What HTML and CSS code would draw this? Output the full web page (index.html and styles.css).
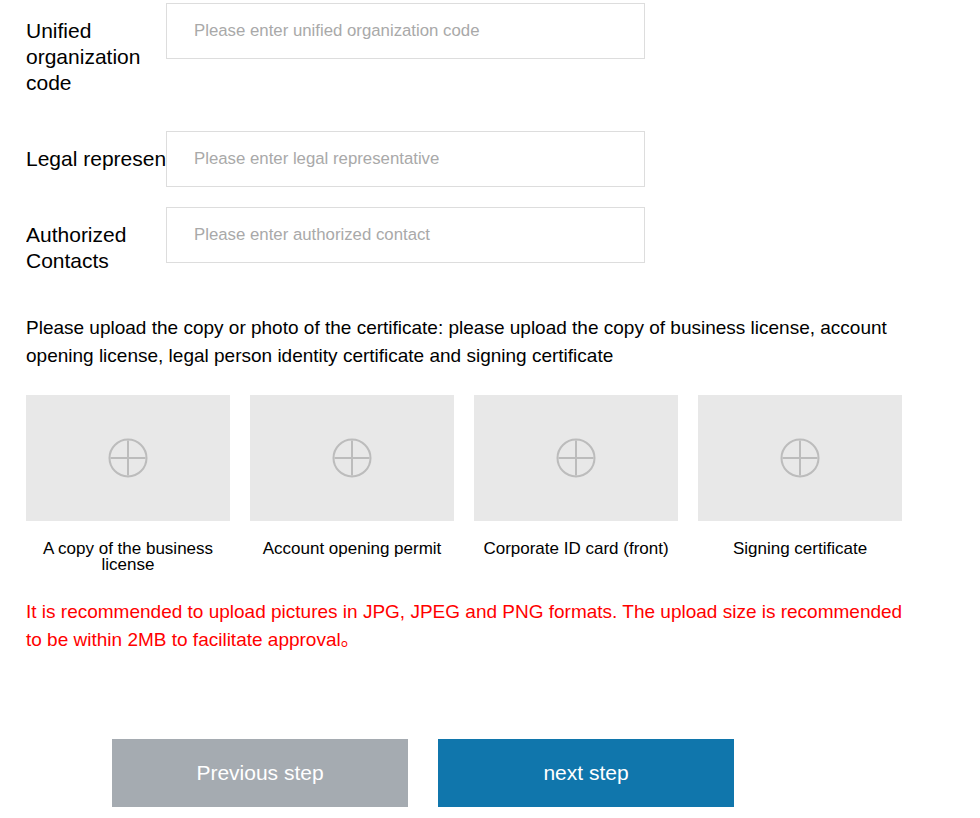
FILE: index.html
```html
<!DOCTYPE html>
<html lang="en">
<head>
<meta charset="utf-8">
<title>Upload certificates</title>
<link rel="stylesheet" href="styles.css">
</head>
<body>
<div class="form">
  <div class="row">
    <div class="label">Unified organization code</div>
    <input class="input" type="text" placeholder="Please enter unified organization code">
  </div>
  <div class="row">
    <div class="label nowrap">Legal representative</div>
    <input class="input" type="text" placeholder="Please enter legal representative">
  </div>
  <div class="row">
    <div class="label">Authorized Contacts</div>
    <input class="input" type="text" placeholder="Please enter authorized contact">
  </div>

  <p class="intro">Please upload the copy or photo of the certificate: please upload the copy of business license, account opening license, legal person identity certificate and signing certificate</p>

  <div class="uploads">
    <div class="upload">
      <div class="box"><svg class="plus" viewBox="0 0 40 40" width="40" height="40"><circle cx="20" cy="20" r="18.5" fill="none" stroke="#bcbcbc" stroke-width="2"/><path d="M20 2.5V37.5M2.5 20H37.5" stroke="#bcbcbc" stroke-width="2"/></svg></div>
      <div class="caption">A copy of the business license</div>
    </div>
    <div class="upload">
      <div class="box"><svg class="plus" viewBox="0 0 40 40" width="40" height="40"><circle cx="20" cy="20" r="18.5" fill="none" stroke="#bcbcbc" stroke-width="2"/><path d="M20 2.5V37.5M2.5 20H37.5" stroke="#bcbcbc" stroke-width="2"/></svg></div>
      <div class="caption">Account opening permit</div>
    </div>
    <div class="upload">
      <div class="box"><svg class="plus" viewBox="0 0 40 40" width="40" height="40"><circle cx="20" cy="20" r="18.5" fill="none" stroke="#bcbcbc" stroke-width="2"/><path d="M20 2.5V37.5M2.5 20H37.5" stroke="#bcbcbc" stroke-width="2"/></svg></div>
      <div class="caption">Corporate ID card (front)</div>
    </div>
    <div class="upload">
      <div class="box"><svg class="plus" viewBox="0 0 40 40" width="40" height="40"><circle cx="20" cy="20" r="18.5" fill="none" stroke="#bcbcbc" stroke-width="2"/><path d="M20 2.5V37.5M2.5 20H37.5" stroke="#bcbcbc" stroke-width="2"/></svg></div>
      <div class="caption">Signing certificate</div>
    </div>
  </div>

  <p class="warn">It is recommended to upload pictures in JPG, JPEG and PNG formats. The upload size is recommended to be within 2MB to facilitate approval。</p>

  <div class="actions">
    <button class="btn btn-prev" type="button">Previous step</button>
    <button class="btn btn-next" type="button">next step</button>
  </div>
</div>
</body>
</html>
```

FILE: styles.css
```css
html, body {
  margin: 0;
  padding: 0;
  background: #fff;
}
body {
  font-family: "Liberation Sans", Arial, "Noto Sans CJK SC", sans-serif;
  color: #000;
}
.form {
  width: 880px;
  padding: 3px 0 0 26px;
}
.row {
  display: flex;
  align-items: flex-start;
  margin-bottom: 20px;
}
.label {
  width: 140px;
  flex-shrink: 0;
  padding: 15px 0;
  font-size: 21px;
  line-height: 26px;
  overflow: hidden;
}
.label.nowrap {
  white-space: nowrap;
}
.input {
  width: 479px;
  height: 56px;
  box-sizing: border-box;
  border: 1px solid #dddddd;
  padding: 0 27px;
  margin: 0;
  font-family: inherit;
  font-size: 16.8px;
  color: #333;
  outline: none;
  background: #fff;
}
.input::placeholder {
  color: #a9a9a9;
}
.intro {
  margin: 25px 0 0;
  font-size: 19px;
  line-height: 28px;
}
.uploads {
  display: flex;
  gap: 20px;
  margin-top: 25px;
}
.upload {
  width: 204px;
}
.box {
  height: 126px;
  background: #e8e8e8;
  display: flex;
  align-items: center;
  justify-content: center;
}
.plus {
  display: block;
}
.caption {
  margin-top: 20px;
  font-size: 17px;
  line-height: 16px;
  text-align: center;
  padding: 0 8px;
}
.warn {
  margin: 25px 0 0;
  color: #ff0000;
  font-size: 19px;
  line-height: 28px;
}
.actions {
  display: flex;
  gap: 30px;
  margin-top: 85px;
  padding-left: 86px;
}
.btn {
  width: 296px;
  height: 68px;
  border: 0;
  margin: 0;
  color: #fff;
  font-family: inherit;
  font-size: 21px;
  cursor: pointer;
}
.btn-prev {
  background: #a5abb1;
}
.btn-next {
  background: #1076ac;
}
```
